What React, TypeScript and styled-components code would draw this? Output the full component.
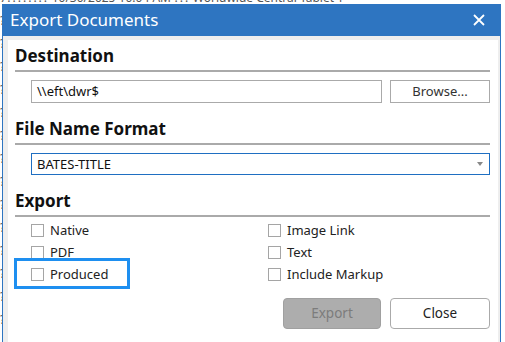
import styled, { createGlobalStyle } from "styled-components";

const GlobalStyle = createGlobalStyle`
  html, body {
    margin: 0;
    padding: 0;
    background: #fff;
    overflow: hidden;
  }
  body {
    font-family: "Noto Sans", "Open Sans", sans-serif;
  }
`;

const Page = styled.div`
  position: relative;
  width: 505px;
  height: 342px;
  overflow: hidden;
  background: #fff;
`;

const BackgroundList = styled.div`
  display: flex;
  flex-direction: column;
  margin-top: -14px;
`;

const BackgroundRow = styled.div`
  height: 23px;
  line-height: 23px;
  font-size: 12px;
  color: #555;
  white-space: nowrap;
`;

const Dialog = styled.div`
  position: absolute;
  left: 2px;
  top: 4px;
  width: 499px;
  height: 340px;
  box-sizing: border-box;
  border-left: 1px solid #2e75c1;
  border-right: 1px solid #2e75c1;
  background: #eeeeee;
  display: flex;
  flex-direction: column;
`;

const TitleBar = styled.div`
  height: 32px;
  flex: 0 0 32px;
  background: #2e75c1;
  color: #fff;
  display: flex;
  align-items: center;
  justify-content: space-between;
  padding: 0 15px 0 7px;
  font-size: 17px;
`;

const Title = styled.span`
  line-height: 32px;
  margin-top: -1px;
`;

const CloseIcon = styled.svg`
  width: 12px;
  height: 12px;
  display: block;
`;

const Body = styled.div`
  flex: 1;
  padding: 4px 2px 0 5px;
  display: flex;
  flex-direction: column;
`;

const Content = styled.div`
  flex: 1;
  background: #fff;
  padding: 6px 8px 0 7px;
  display: flex;
  flex-direction: column;
`;

const SectionHeading = styled.div<{ $first?: boolean }>`
  font-size: 17px;
  font-weight: 700;
  color: #111;
  line-height: 20px;
  padding-bottom: 4px;
  border-bottom: 2px solid #aaaaaa;
  margin-top: ${(p) => (p.$first ? "0" : "16px")};
`;

const FieldRow = styled.div`
  display: flex;
  gap: 8px;
  margin: 8px 0 0 16px;
`;

const TextInput = styled.div`
  flex: 1;
  height: 23px;
  box-sizing: border-box;
  border: 1px solid #aaaaaa;
  padding-left: 5px;
  font-size: 13px;
  line-height: 21px;
  color: #111;
`;

const BrowseButton = styled.div`
  width: 100px;
  height: 23px;
  box-sizing: border-box;
  border: 1px solid #aaaaaa;
  font-size: 13px;
  line-height: 21px;
  color: #333;
  text-align: center;
`;

const Select = styled.div`
  flex: 1;
  height: 22px;
  box-sizing: border-box;
  border: 1px solid #1f6fc2;
  padding: 0 6px 0 5px;
  font-size: 13px;
  line-height: 20px;
  color: #111;
  display: flex;
  align-items: center;
  justify-content: space-between;
`;

const Caret = styled.span`
  width: 0;
  height: 0;
  border-left: 3px solid transparent;
  border-right: 3px solid transparent;
  border-top: 4px solid #888;
`;

const OptionGrid = styled.div`
  display: grid;
  grid-template-columns: 237px auto;
  grid-auto-flow: column;
  grid-template-rows: repeat(3, 22px);
  margin: 2px 0 0 16px;
`;

const Option = styled.label<{ $focused?: boolean }>`
  position: relative;
  display: flex;
  align-items: center;
  gap: 6px;
  font-size: 13px;
  color: #222;
  height: 22px;
  width: max-content;

  ${(p) =>
    p.$focused &&
    `
    &::after {
      content: "";
      position: absolute;
      top: -5px;
      bottom: -4px;
      left: -17px;
      right: -22px;
      border: 3px solid #1e8ff0;
    }
  `}
`;

const Box = styled.span`
  width: 13px;
  height: 13px;
  box-sizing: border-box;
  border: 1px solid #a5a5a5;
  background: #fff;
`;

const ButtonRow = styled.div`
  display: flex;
  justify-content: flex-end;
  gap: 9px;
  margin-top: 13px;
`;

const ActionButton = styled.div<{ $disabled?: boolean }>`
  width: ${(p) => (p.$disabled ? "98px" : "100px")};
  height: 31px;
  box-sizing: border-box;
  border-radius: 4px;
  border: 1px solid ${(p) => (p.$disabled ? "#a0a0a0" : "#aaaaaa")};
  background: ${(p) => (p.$disabled ? "#adadad" : "#fff")};
  color: ${(p) => (p.$disabled ? "#7c7c7c" : "#222")};
  font-size: 13.5px;
  line-height: 29px;
  text-align: center;
`;

const bgRows = [
  "7????????        10/30/2025 10:04 AM          ??? Worldwide Central Tablet T",
  "?                                                                                               ng",
  "?                                                                                               0",
  "?                                                                                               T",
  "?                                                                                               ",
  "?                                                                                               C",
  "?                                                                                               ",
  "?                                                                                               g",
  "?                                                                                               T",
  "?                                                                                               c",
  "?                                                                                               ",
  "?                                                                                               0",
  "?                                                                                               c",
  "?                                                                                               T",
  "?                                                                                               ",
];

export default function App() {
  return (
    <>
      <GlobalStyle />
      <Page>
        <BackgroundList>
          {bgRows.map((r, i) => (
            <BackgroundRow key={i}>{r}</BackgroundRow>
          ))}
        </BackgroundList>
        <Dialog>
          <TitleBar>
            <Title>Export Documents</Title>
            <CloseIcon viewBox="0 0 12 12">
              <path d="M1 1 L11 11 M11 1 L1 11" stroke="#fff" strokeWidth="1.8" fill="none" />
            </CloseIcon>
          </TitleBar>
          <Body>
            <Content>
              <SectionHeading $first>Destination</SectionHeading>
              <FieldRow>
                <TextInput>\\eft\dwr$</TextInput>
                <BrowseButton>Browse...</BrowseButton>
              </FieldRow>
              <SectionHeading>File Name Format</SectionHeading>
              <FieldRow>
                <Select>
                  <span>BATES-TITLE</span>
                  <Caret />
                </Select>
              </FieldRow>
              <SectionHeading>Export</SectionHeading>
              <OptionGrid>
                <Option><Box />Native</Option>
                <Option><Box />PDF</Option>
                <Option $focused><Box />Produced</Option>
                <Option><Box />Image Link</Option>
                <Option><Box />Text</Option>
                <Option><Box />Include Markup</Option>
              </OptionGrid>
              <ButtonRow>
                <ActionButton $disabled>Export</ActionButton>
                <ActionButton>Close</ActionButton>
              </ButtonRow>
            </Content>
          </Body>
        </Dialog>
      </Page>
    </>
  );
}
